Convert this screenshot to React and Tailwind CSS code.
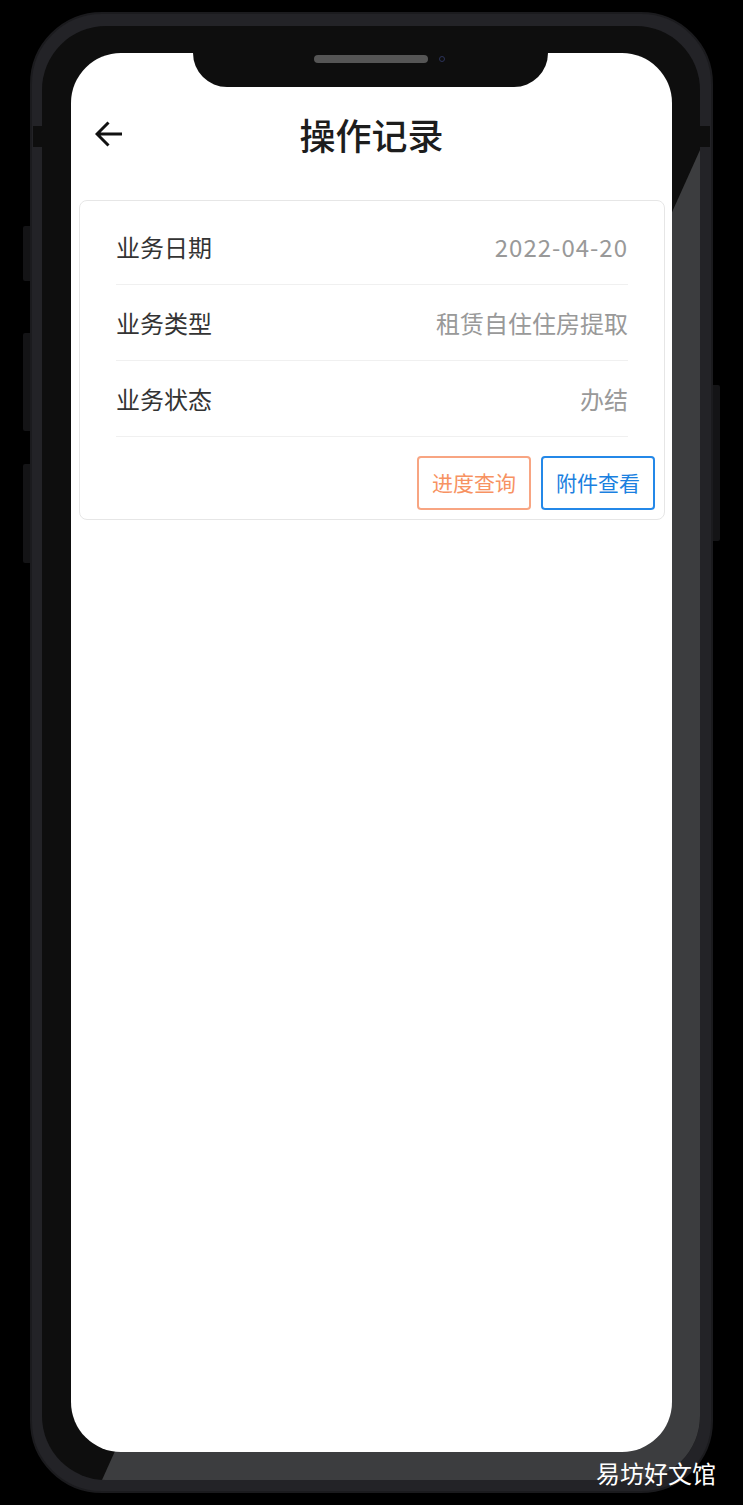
import React from 'react';

const rows = [
  { label: '业务日期', value: '2022-04-20', date: true },
  { label: '业务类型', value: '租赁自住住房提取' },
  { label: '业务状态', value: '办结' },
];

const BackArrow = () => (
  <svg width="27" height="26" viewBox="0 0 27 26" fill="none">
    <path d="M27 13H2M13.5 1.5L2 13l11.5 11.5" stroke="#111" strokeWidth="3" />
  </svg>
);

const App = () => {
  return (
    <div className="relative w-[743px] h-[1505px] bg-black overflow-hidden pl-[30px] pt-[12px] font-['Noto_Sans_CJK_SC',sans-serif]">
      {/* phone body */}
      <div className="relative w-[683px] h-[1481px] rounded-[72px] bg-[#232327] border-2 border-[#1b1b1e] pl-[10px] pr-[11px] pt-[12px] pb-[11px]">
        {/* side buttons */}
        <div className="absolute left-[-9px] top-[212px] w-[7px] h-[55px] rounded-l-[2px] bg-[#141416]" />
        <div className="absolute left-[-9px] top-[319px] w-[7px] h-[98px] rounded-l-[2px] bg-[#141416]" />
        <div className="absolute left-[-9px] top-[450px] w-[7px] h-[99px] rounded-l-[2px] bg-[#141416]" />
        <div className="absolute right-[-9px] top-[371px] w-[7px] h-[156px] rounded-r-[2px] bg-[#141416]" />
        {/* antenna lines */}
        <div className="absolute left-[1px] top-[112px] w-[10px] h-[21px] bg-[#0e0e0e]" />
        <div className="absolute right-[1px] top-[112px] w-[10px] h-[21px] bg-[#0e0e0e]" />

        {/* bezel */}
        <div className="relative w-[658px] h-[1454px] rounded-[64px] bg-[#0e0e0e] overflow-hidden pl-[29px] pt-[27px]">
          <svg className="absolute inset-0" width="658" height="1454" viewBox="0 0 658 1454">
            <polygon points="658,124 658,1454 60,1454" fill="#3c3d3f" />
          </svg>

          {/* screen */}
          <div className="relative w-[601px] h-[1399px] rounded-[50px] bg-white overflow-hidden">
            {/* notch */}
            <div className="absolute left-[122px] top-0 w-[355px] h-[34px] rounded-b-[34px] bg-[#0e0e0e] flex items-start pl-[121px] pt-[2px]">
              <div className="w-[114px] h-[8px] rounded-full bg-[#555555]" />
              <div className="ml-[11px] mt-[1px] w-[6px] h-[6px] rounded-full border border-[#2b3258]" />
            </div>

            {/* header */}
            <div className="mt-[53px] h-[56px] px-[24px] flex items-center">
              <div className="w-[27px] flex items-center">
                <BackArrow />
              </div>
              <div className="flex-1 text-center text-[36px] leading-none font-medium text-[#1d1d1d]">操作记录</div>
              <div className="w-[27px]" />
            </div>

            {/* record card */}
            <div className="mt-[38px] ml-[8px] w-[586px] rounded-[8px] border border-[#e6e6e6] bg-white pt-[8px] pb-[9px]">
              <div className="px-[36px]">
                {rows.map((r) => (
                  <div key={r.label} className="h-[76px] flex items-center justify-between border-b border-[#f0f0f0]">
                    <span className="text-[24px] leading-none text-[#333333]">{r.label}</span>
                    <span className={r.date ? 'text-[24px] leading-none tracking-[1px] text-[#999999]' : 'text-[24px] leading-none text-[#999999]'}>
                      {r.value}
                    </span>
                  </div>
                ))}
              </div>
              <div className="mt-[19px] pr-[9px] flex justify-end gap-[10px]">
                <button className="w-[114px] h-[54px] rounded-[4px] border-2 border-[#f8a582] text-[21px] text-[#f79262] flex items-center justify-center">
                  进度查询
                </button>
                <button className="w-[114px] h-[54px] rounded-[4px] border-2 border-[#2488e8] text-[21px] text-[#1a80e0] flex items-center justify-center">
                  附件查看
                </button>
              </div>
            </div>
          </div>
        </div>
      </div>

      {/* watermark */}
      <div className="absolute left-[596px] top-[1461px] text-[24px] leading-none text-white">易坊好文馆</div>
    </div>
  );
};

export default App;
